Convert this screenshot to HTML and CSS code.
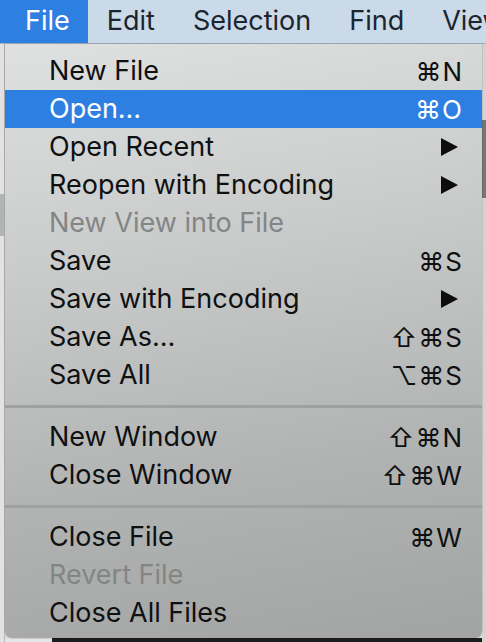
FILE: index.html
```html
<!DOCTYPE html>
<html>
<head>
<meta charset="utf-8">
<link rel="stylesheet" href="styles.css">
</head>
<body>
<div class="screen">
  <div class="menubar">
    <div class="mb-item active">File</div>
    <div class="mb-item">Edit</div>
    <div class="mb-item">Selection</div>
    <div class="mb-item">Find</div>
    <div class="mb-item">View</div>
  </div>
  <div class="workspace">
    <div class="side">
      <div class="side-block"></div>
    </div>
    <div class="content">
      <div class="content-top"></div>
      <div class="content-bottom"></div>
    </div>
    <div class="rightstrip">
      <div class="rs-dark"></div>
    </div>
  </div>

  <div class="menu">
    <div class="row"><span class="label">New File</span><span class="key">⌘N</span></div>
    <div class="row selected"><span class="label">Open…</span><span class="key">⌘O</span></div>
    <div class="row"><span class="label">Open Recent</span><span class="arrow"></span></div>
    <div class="row"><span class="label">Reopen with Encoding</span><span class="arrow"></span></div>
    <div class="row disabled"><span class="label">New View into File</span></div>
    <div class="row"><span class="label">Save</span><span class="key">⌘S</span></div>
    <div class="row"><span class="label">Save with Encoding</span><span class="arrow"></span></div>
    <div class="row"><span class="label">Save As…</span><span class="key">⇧⌘S</span></div>
    <div class="row"><span class="label">Save All</span><span class="key">⌥⌘S</span></div>
    <div class="sep"></div>
    <div class="row"><span class="label">New Window</span><span class="key">⇧⌘N</span></div>
    <div class="row"><span class="label">Close Window</span><span class="key">⇧⌘W</span></div>
    <div class="sep"></div>
    <div class="row"><span class="label">Close File</span><span class="key">⌘W</span></div>
    <div class="row disabled"><span class="label">Revert File</span></div>
    <div class="row"><span class="label">Close All Files</span></div>
  </div>
</div>
</body>
</html>
```

FILE: styles.css
```css
html, body {
  margin: 0;
  padding: 0;
}
body {
  width: 486px;
  height: 642px;
  overflow: hidden;
  font-family: "Inter", "Liberation Sans", "DejaVu Sans", sans-serif;
}
.screen {
  position: relative;
  width: 486px;
  height: 642px;
  display: flex;
  flex-direction: column;
  background: #e4e4e4;
}
.menubar {
  height: 43px;
  flex: none;
  display: flex;
  align-items: stretch;
  background: #cbdae8;
  border-bottom: 1px solid #a8b2bb;
  white-space: nowrap;
  overflow: hidden;
}
.mb-item {
  display: flex;
  align-items: center;
  padding: 0 19px 2px 19px;
  font-size: 27px;
  color: #1b2530;
}
.mb-item:first-child {
  padding-left: 25px;
  padding-right: 18px;
}
.mb-item.active {
  background: #2e7fe2;
  color: #ffffff;
}
.workspace {
  flex: 1;
  display: flex;
}
.side {
  width: 4px;
  background: #e2e2e2;
  border-right: 1px solid #b9b9b9;
  padding-top: 150px;
}
.side-block {
  height: 42px;
  background: #b1b3b7;
}
.content {
  flex: 1;
  display: flex;
  flex-direction: column;
}
.content-top {
  flex: 1;
  background: #dcdcdc;
}
.content-bottom {
  height: 4px;
  margin-left: 47px;
  background: #1c1c1c;
}
.rightstrip {
  width: 4px;
  background: #d2d3d4;
  padding-top: 76px;
}
.rs-dark {
  height: 78px;
  background: #74777a;
}

/* dropdown menu overlay */
.menu {
  position: absolute;
  left: 5px;
  top: 44px;
  width: 477px;
  height: 594px;
  box-sizing: border-box;
  padding: 8px 0 6px;
  border-radius: 0 0 7px 7px;
  background: linear-gradient(170deg, #dfe0e0 0%, #c9cbcb 35%, #b1b3b3 70%, #a2a4a3 100%);
  box-shadow: 0 0 0 0.5px rgba(0,0,0,0.18);
  display: flex;
  flex-direction: column;
}
.row {
  height: 38px;
  flex: none;
  display: flex;
  align-items: center;
  justify-content: space-between;
  padding: 0 19px 0 44px;
  font-size: 27px;
  color: #0f1011;
  white-space: nowrap;
}
.row .label {
  padding-bottom: 1px;
}
.row.selected {
  background: #2e7fe2;
  color: #ffffff;
}
.row.disabled {
  color: #838585;
}
.key {
  font-family: "Inter", "DejaVu Sans", sans-serif;
  font-size: 26px;
  letter-spacing: 1px;
}
.arrow {
  width: 0;
  height: 0;
  margin-right: 5px;
  border-top: 9px solid transparent;
  border-bottom: 9px solid transparent;
  border-left: 17px solid #0d0d0d;
}
.sep {
  height: 24px;
  flex: none;
  display: flex;
  align-items: center;
}
.sep::after {
  content: "";
  display: block;
  width: 100%;
  height: 3px;
  background: #9fa1a1;
}
```
